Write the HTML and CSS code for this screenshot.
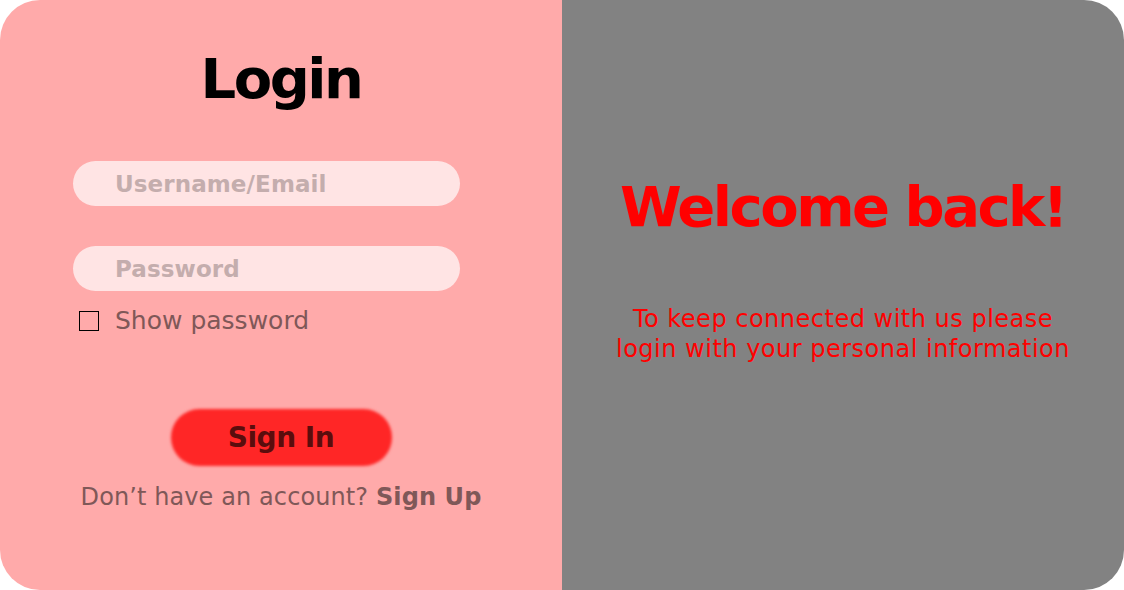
FILE: index.html
```html
<!DOCTYPE html>
<html lang="en">
<head>
<meta charset="utf-8">
<title>Login</title>
<link rel="stylesheet" href="styles.css">
</head>
<body>
<main class="card">
  <section class="panel panel-login">
    <h1 class="login-title">Login</h1>
    <form class="login-form">
      <input class="field" type="text" placeholder="Username/Email">
      <input class="field field-password" type="password" placeholder="Password">
      <label class="show-row">
        <input class="check" type="checkbox">
        <span>Show password</span>
      </label>
    </form>
    <button class="signin" type="button"><span class="signin-label">Sign In</span></button>
    <p class="signup">Don’t have an account? <strong>Sign Up</strong></p>
  </section>
  <section class="panel panel-welcome">
    <h2 class="welcome-title">Welcome back!</h2>
    <p class="welcome-text">To keep connected with us please<br>login with your personal information</p>
  </section>
</main>
</body>
</html>
```
FILE: styles.css
```css
* { box-sizing: border-box; }

html, body {
  margin: 0;
  padding: 0;
  background: #ffffff;
}

body {
  font-family: "DejaVu Sans", "Liberation Sans", sans-serif;
  width: 1124px;
  height: 590px;
  overflow: hidden;
}

.card {
  display: grid;
  grid-template-columns: 562px 562px;
  width: 1124px;
  height: 590px;
  border-radius: 40px;
  overflow: hidden;
}

.panel {
  display: flex;
  flex-direction: column;
  align-items: center;
}

.panel-login {
  background: #ffaaaa;
  padding-top: 45px;
}

.login-title {
  margin: 0;
  font-size: 56px;
  line-height: 68px;
  font-weight: 700;
  letter-spacing: -2.5px;
  color: #000000;
}

.login-form {
  align-self: stretch;
  display: flex;
  flex-direction: column;
  padding-left: 73px;
  margin: 48px 0 0 0;
}

.field {
  width: 387px;
  height: 45px;
  border: none;
  outline: none;
  border-radius: 23px;
  background: #ffe4e4;
  padding: 0 0 0 42px;
  font-family: inherit;
  font-size: 23px;
  font-weight: 700;
  letter-spacing: 0.1px;
  color: #7f5555;
}

.field::placeholder {
  color: #c4adad;
  opacity: 1;
}

.field-password {
  margin-top: 40px;
}

.show-row {
  display: flex;
  align-items: center;
  height: 30px;
  margin-top: 15px;
  font-size: 25px;
  line-height: 30px;
  color: #7f5858;
}

.check {
  appearance: none;
  -webkit-appearance: none;
  width: 20px;
  height: 20px;
  margin: 0 16px 0 6px;
  border: 1px solid #000000;
  background: transparent;
}

.signin {
  position: relative;
  margin-top: 73px;
  width: 221px;
  height: 57px;
  border: none;
  background: transparent;
  font-family: inherit;
  font-size: 28px;
  font-weight: 700;
  letter-spacing: -0.5px;
  color: #5a0d0d;
  display: flex;
  align-items: center;
  justify-content: center;
  padding: 0;
}

.signin::before {
  content: "";
  position: absolute;
  inset: 0;
  border-radius: 29px;
  background: #ff2626;
  filter: blur(1.6px);
}

.signin-label {
  position: relative;
}

.signup {
  margin: 16px 0 0 0;
  font-size: 24px;
  line-height: 30px;
  color: #7f5858;
  letter-spacing: 0.1px;
}

.signup strong {
  font-weight: 700;
}

.panel-welcome {
  background: #828282;
  padding-top: 173px;
}

.welcome-title {
  margin: 0;
  font-size: 56px;
  line-height: 68px;
  font-weight: 700;
  letter-spacing: -2.5px;
  color: #ff0000;
}

.welcome-text {
  margin: 63px 0 0 0;
  font-size: 24px;
  line-height: 30px;
  letter-spacing: 0.5px;
  text-align: center;
  color: #ff0000;
}
```
